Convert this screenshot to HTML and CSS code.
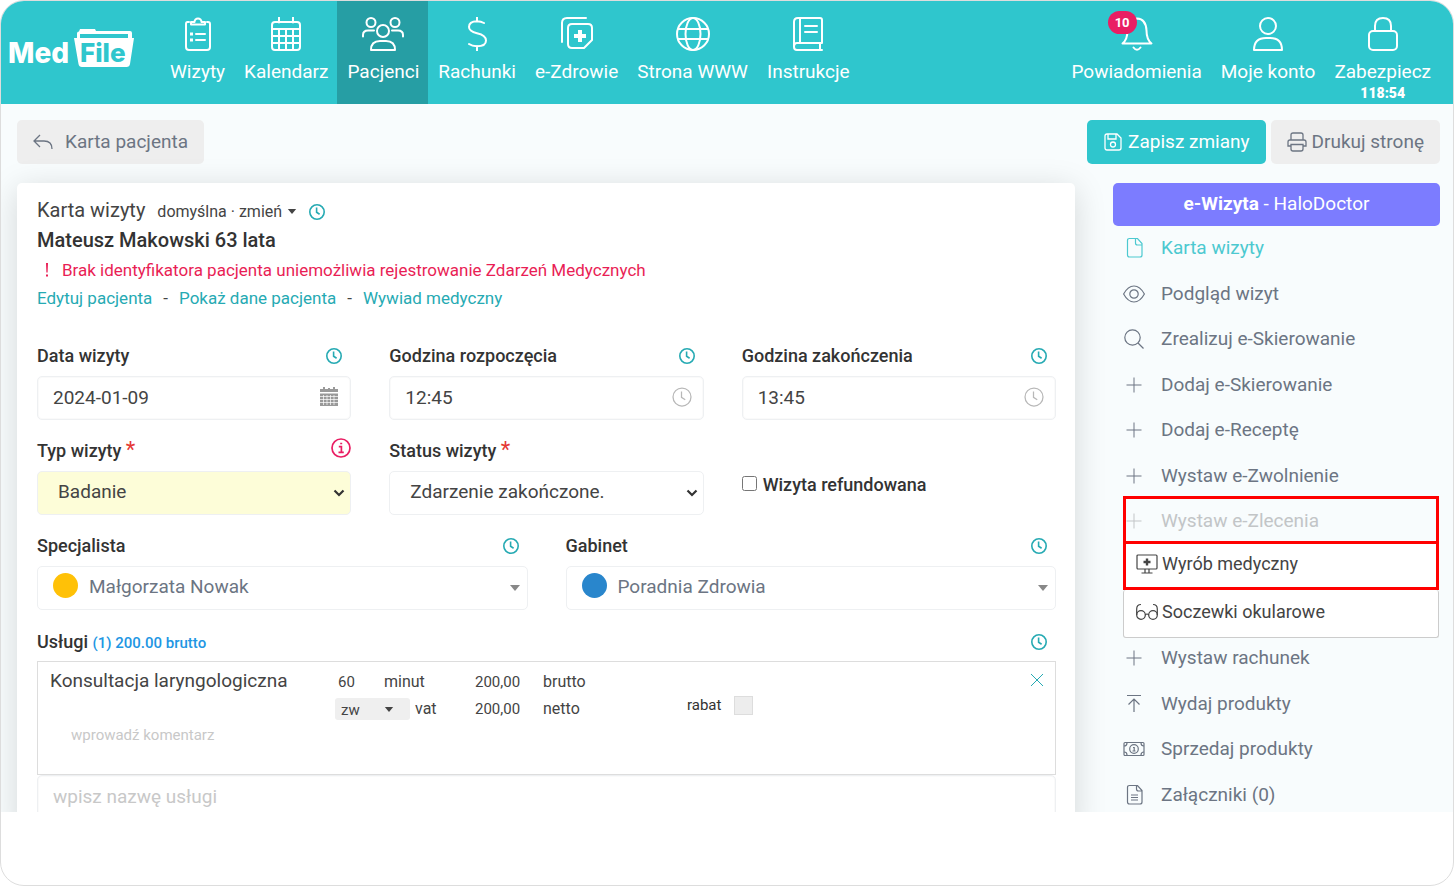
FILE: index.html
```html
<!DOCTYPE html>
<html lang="pl">
<head>
<meta charset="utf-8">
<meta name="viewport" content="width=device-width, initial-scale=1">
<title>MedFile – Karta wizyty</title>
<link rel="stylesheet" href="styles.css">
</head>
<body>
<svg class="sprite" aria-hidden="true">
  <symbol id="clock" viewBox="0 0 16 16"><circle cx="8" cy="8" r="7.2"/><path d="M7.6 3.6v4.7l3 1.9"/></symbol>
  <symbol id="plus" viewBox="0 0 16 16"><path d="M8 0.5v15M0.5 8h15"/></symbol>
  <symbol id="caret" viewBox="0 0 10 6"><path d="M0 0h10L5 6z"/></symbol>
  <symbol id="chevron" viewBox="0 0 12 8"><path d="m1.500 1.500 4.500 4.500 4.500-4.500"/></symbol>
</svg>
<div class="frame">
  <header class="topbar">
    <a class="logo" href="#" aria-label="MedFile">
      <svg viewBox="0 0 126 42" width="126" height="42">
        <path d="M68 12V5.500q0-2 2-2l1-2.500h15l1 2h34q2 0 2 2v7z" fill="#fff"/>
        <path d="M71 6h48v6H71z" fill="#2fc6cd"/>
        <path d="M72 6h46v6H72z" fill="#2fc6cd"/>
        <path d="M65 10h60l-4 26q-.5 3-3.500 3H73q-3 0-3.500-3z" fill="#fff"/>
        <text class="logo-text" x="-1" y="35">Med</text>
        <text class="logo-text logo-file" x="71" y="34">File</text>
      </svg>
    </a>
    <nav class="nav">
      <a class="nav-item" href="#">
        <svg class="ico" viewBox="0 0 34 34"><path d="M8 5H6.500Q5 5 5 7v23q0 3 3 3h18q3 0 3-3V7q0-2-2-2h-1M10 7.500h14M10 7.500V5h3.500a3.500 3.500 0 0 1 7 0H24v2.500M15 17h9M15 23h9"/><path class="dot" d="M9 15.500h3v3H9zM9 21.500h3v3H9z"/></svg>
        <span>Wizyty</span></a>
      <a class="nav-item" href="#">
        <svg class="ico" viewBox="0 0 34 34"><rect x="3" y="5" width="28" height="28" rx="3"/><path d="M10 0.500v5M24 0.500v5M3 12h28M3 19h28M3 26h28M10 12v21M17 12v21M24 12v21"/></svg>
        <span>Kalendarz</span></a>
      <a class="nav-item active" href="#" aria-current="page">
        <svg class="ico ico-wide" viewBox="0 0 42 34"><circle cx="9" cy="5.500" r="4.500"/><circle cx="33" cy="5.500" r="4.500"/><circle cx="21" cy="14" r="6"/><path d="M1 19.500v-1.500q0-4.500 5-4.500h6M41 19.500v-1.500q0-4.500-5-4.500h-6M9 33q0-9 9-9h6q9 0 9 9z"/></svg>
        <span>Pacjenci</span></a>
      <a class="nav-item" href="#">
        <svg class="ico" viewBox="0 0 34 34"><path d="M17 0v4.500M17 29v5M24 6q-3-1.700-7-1.700-8 0-8 5.700 0 4.300 8 6.200 9 2.100 9 7.300 0 5.700-9 5.700-5 0-8-2.200"/></svg>
        <span>Rachunki</span></a>
      <a class="nav-item" href="#">
        <svg class="ico" viewBox="0 0 34 34"><path d="M2 25V6q0-5 5-5h19M12 7h16q4 0 4 4v12l-8 8H12q-4 0-4-4V11q0-4 4-4z"/><path class="dot" d="M18 13h4v4h4v4h-4v4h-4v-4h-4v-4h4z"/></svg>
        <span>e-Zdrowie</span></a>
      <a class="nav-item" href="#">
        <svg class="ico" viewBox="0 0 34 34"><circle cx="17" cy="17" r="16"/><ellipse cx="17" cy="17" rx="7.500" ry="16"/><path d="M2.500 12h29M2.500 22h29"/></svg>
        <span>Strona WWW</span></a>
      <a class="nav-item" href="#">
        <svg class="ico" viewBox="0 0 34 34"><path d="M31 26V3q0-2-2-2H7Q3 1 3 5v25q0 3 3 3h25M31 26H6q-3 0-3 4M29 26v7M9 1v25M14 9h12M14 15h12"/></svg>
        <span>Instrukcje</span></a>
    </nav>
    <nav class="nav nav-right">
      <a class="nav-item" href="#">
        <span class="bell"><svg class="ico" viewBox="0 0 34 34"><path d="M2.500 26.500q5-4 5-13Q8 2 17 1.500 26 2 26.500 13.500q0 9 5 13z"/><path d="M13.500 30.500q3.500 4.500 7 0"/></svg><span class="badge">10</span></span>
        <span>Powiadomienia</span></a>
      <a class="nav-item" href="#">
        <svg class="ico" viewBox="0 0 34 34"><circle cx="17" cy="9" r="8"/><path d="M3 33q0-12 12-12h4q12 0 12 12z"/></svg>
        <span>Moje konto</span></a>
      <a class="nav-item" href="#">
        <svg class="ico" viewBox="0 0 34 34"><rect x="3" y="14" width="28" height="19" rx="4"/><path d="M9 14V9q0-8 8-8t8 8v5"/></svg>
        <span>Zabezpiecz</span><strong class="timer">118:54</strong></a>
    </nav>
  </header>

  <main class="main">
    <div class="toolbar">
      <button class="btn btn-back" type="button"><svg class="i20" viewBox="0 0 20 20"><path d="M7 3 1 9l6 6M1 9h10q8 0 8 8"/></svg>Karta pacjenta</button>
      <div class="toolbar-end">
        <button class="btn btn-primary" type="button"><svg class="i20" viewBox="0 0 20 20"><path d="M4 2h10l4 4v10q0 2-2 2H4q-2 0-2-2V4q0-2 2-2zM5 2v5h8V2"/><circle cx="10" cy="12.500" r="2.500"/></svg>Zapisz zmiany</button>
        <button class="btn" type="button"><svg class="i20" viewBox="0 0 20 20"><path d="M4 8V3q0-2 2-2h8q2 0 2 2v5M4 14H1v-4q0-2 2-2h14q2 0 2 2v4h-3M4 12.500h12V17q0 2-2 2H6q-2 0-2-2z"/></svg>Drukuj stronę</button>
      </div>
    </div>

    <div class="columns">
      <form class="card">
        <div class="title-row">
          <h1>Karta wizyty</h1>
          <button class="link-btn template" type="button">domyślna · zmień <svg class="caret" width="10" height="5"><use href="#caret"/></svg></button>
          <button class="link-btn history" type="button" aria-label="Historia"><svg class="clock"><use href="#clock"/></svg></button>
        </div>
        <h2>Mateusz Makowski 63 lata</h2>
        <p class="warning"><svg width="4" height="14" viewBox="0 0 4 14"><path d="M1 0h2l-.4 9.500H1.400zM1 11.500h2v2H1z"/></svg>Brak identyfikatora pacjenta uniemożliwia rejestrowanie Zdarzeń Medycznych</p>
        <p class="links"><a href="#">Edytuj pacjenta</a><span>-</span><a href="#">Pokaż dane pacjenta</a><span>-</span><a href="#">Wywiad medyczny</a></p>

        <div class="fields three">
          <div class="field">
            <div class="label-row"><label for="date">Data wizyty</label><svg class="clock"><use href="#clock"/></svg></div>
            <div class="control"><input id="date" type="text" value="2024-01-09"><svg class="inner-ico" viewBox="0 0 20 20"><path class="cal" d="M1 2h18v3H1zM4 0h2v3H4zM14 0h2v3h-2zM9 1h2v2H9zM1 6.500h18V19H1z"/><path class="cal-lines" d="M1 9.500h18M1 12.500h18M1 15.500h18M4.500 8v10M8 8v10M11.500 8v10M15 8v10"/></svg></div>
          </div>
          <div class="field">
            <div class="label-row"><label for="start">Godzina rozpoczęcia</label><svg class="clock"><use href="#clock"/></svg></div>
            <div class="control"><input id="start" type="text" value="12:45"><svg class="inner-ico"><use href="#clock"/></svg></div>
          </div>
          <div class="field">
            <div class="label-row"><label for="end">Godzina zakończenia</label><svg class="clock"><use href="#clock"/></svg></div>
            <div class="control"><input id="end" type="text" value="13:45"><svg class="inner-ico"><use href="#clock"/></svg></div>
          </div>
          <div class="field">
            <div class="label-row"><label for="type">Typ wizyty <b class="req">*</b></label><svg class="info" viewBox="0 0 20 20"><circle cx="10" cy="10" r="9"/><path d="M7.800 8.700h2.600v5.600M7.500 14.300h5.300M9.200 5.500h2"/></svg></div>
            <div class="control"><select id="type" class="required"><option>Badanie</option></select><svg class="chevron"><use href="#chevron"/></svg></div>
          </div>
          <div class="field">
            <div class="label-row"><label for="status">Status wizyty <b class="req">*</b></label></div>
            <div class="control"><select id="status"><option>Zdarzenie zakończone.</option></select><svg class="chevron"><use href="#chevron"/></svg></div>
          </div>
          <div class="check"><input id="refund" type="checkbox"><label for="refund">Wizyta refundowana</label></div>
        </div>

        <div class="fields two">
          <div class="field">
            <div class="label-row"><label for="doctor">Specjalista</label><svg class="clock"><use href="#clock"/></svg></div>
            <div class="control picker"><i class="swatch yellow"></i><select id="doctor"><option>Małgorzata Nowak</option></select><svg class="caret" width="10" height="6"><use href="#caret"/></svg></div>
          </div>
          <div class="field">
            <div class="label-row"><label for="room">Gabinet</label><svg class="clock"><use href="#clock"/></svg></div>
            <div class="control picker"><i class="swatch blue"></i><select id="room"><option>Poradnia Zdrowia</option></select><svg class="caret" width="10" height="6"><use href="#caret"/></svg></div>
          </div>
        </div>

        <section class="services">
          <div class="label-row"><label for="service">Usługi <span class="sum">(1) 200.00 brutto</span></label><svg class="clock"><use href="#clock"/></svg></div>
          <div class="service">
            <div class="service-main">
              <span class="service-name">Konsultacja laryngologiczna</span>
              <div class="lines">
                <div class="line"><input class="num minutes" value="60" aria-label="minut"><span>minut</span></div>
                <div class="line"><span class="vat"><select aria-label="vat"><option>zw</option></select><svg class="caret" width="10" height="5"><use href="#caret"/></svg></span><span>vat</span></div>
              </div>
              <div class="lines">
                <div class="line"><input class="num" value="200,00" aria-label="brutto"></div>
                <div class="line"><input class="num" value="200,00" aria-label="netto"></div>
              </div>
              <div class="lines">
                <div class="line">brutto</div>
                <div class="line">netto</div>
              </div>
              <label class="discount" for="discount">rabat</label>
              <input class="discount-box" id="discount" type="checkbox">
              <button class="link-btn remove" type="button" aria-label="Usuń"><svg width="12" height="12" viewBox="0 0 12 12"><path d="M0 0l12 12M12 0 0 12"/></svg></button>
            </div>
            <input class="comment" type="text" placeholder="wprowadź komentarz" aria-label="Komentarz">
          </div>
          <div class="control"><input id="service" type="text" placeholder="wpisz nazwę usługi"></div>
        </section>
      </form>

      <aside class="side">
        <button class="ewizyta" type="button"><b>e-Wizyta</b> - HaloDoctor</button>
        <ul class="side-list">
          <li><a class="side-link current" href="#"><svg class="si" viewBox="0 0 22 22"><path d="M6.500 1.500h8l4.500 5V18q0 2-2 2H6.500q-2 0-2-2V3.500q0-2 2-2zM12.500 1.500V6q0 2 2 2H19"/></svg>Karta wizyty</a></li>
          <li><a class="side-link" href="#"><svg class="si" viewBox="0 0 22 22"><path d="M.600 11Q5 3 11 3t10.400 8Q17 19 11 19T.600 11z"/><circle cx="11" cy="11" r="4.200"/></svg>Podgląd wizyt</a></li>
          <li><a class="side-link" href="#"><svg class="si" viewBox="0 0 22 22"><circle cx="9.500" cy="9.500" r="7.700"/><path d="m15 15 5.500 5.500"/></svg>Zrealizuj e-Skierowanie</a></li>
          <li><a class="side-link" href="#"><svg class="si plus"><use href="#plus"/></svg>Dodaj e-Skierowanie</a></li>
          <li><a class="side-link" href="#"><svg class="si plus"><use href="#plus"/></svg>Dodaj e-Receptę</a></li>
          <li><a class="side-link" href="#"><svg class="si plus"><use href="#plus"/></svg>Wystaw e-Zwolnienie</a></li>
          <li class="expanded">
            <a class="side-link muted marked" href="#"><svg class="si plus"><use href="#plus"/></svg>Wystaw e-Zlecenia</a>
            <a class="sub-link marked" href="#"><svg class="si" viewBox="0 0 22 22"><rect x="1" y="2" width="20" height="14" rx="1"/><path d="M9 16v4M13 16v4M5.500 20h11"/><path class="dot" d="M9.800 5.500h2.400v2.300h2.300v2.400h-2.300v2.300H9.800v-2.300H7.500V7.800h2.300z"/></svg>Wyrób medyczny</a>
            <a class="sub-link" href="#"><svg class="si" viewBox="0 0 22 22"><circle cx="5" cy="14" r="4.300"/><circle cx="17" cy="14" r="4.300"/><path d="M9.300 14q1.700-2 3.400 0M.700 14V8q0-4.500 4.300-4.500M21.300 14V8q0-4.500-4.300-4.500"/></svg>Soczewki okularowe</a>
          </li>
          <li><a class="side-link" href="#"><svg class="si plus"><use href="#plus"/></svg>Wystaw rachunek</a></li>
          <li><a class="side-link" href="#"><svg class="si" viewBox="0 0 22 22"><path d="M4 2.500h14M11 19V6M5.500 11.500 11 6l5.500 5.500"/></svg>Wydaj produkty</a></li>
          <li><a class="side-link" href="#"><svg class="si" viewBox="0 0 22 22"><rect x="1" y="4.500" width="20" height="13" rx="1"/><circle cx="11" cy="11" r="4.300"/><path d="M1 8q3 0 3-3M21 8q-3 0-3-3M1 14q3 0 3 3M21 14q-3 0-3 3M10 9.500h1.200v3.500M9.500 13h3"/></svg>Sprzedaj produkty</a></li>
          <li><a class="side-link" href="#"><svg class="si" viewBox="0 0 22 22"><path d="M6.500 1.500h8l4.500 5V18q0 2-2 2H6.500q-2 0-2-2V3.500q0-2 2-2zM13.500 1.500V5q0 2 2 2H19M8 11h7M8 13.500h7M8 16h7"/></svg>Załączniki (0)</a></li>
        </ul>
      </aside>
    </div>
  </main>
</div>
</body>
</html>
```
FILE: styles.css
```css
:root {
  --teal: #2fc6cd;
  --teal-dark: #26aab3;
  --line: #eef0f2;
  --gray: #6c7583;
  --text: #444;
}

* { box-sizing: border-box; }

body {
  margin: 0;
  background: #fff;
  color: var(--text);
  font: 400 19px/24px Roboto, "Open Sans", sans-serif;
}

h1, h2, p, ul { margin: 0; padding: 0; }
ul { list-style: none; }
a { color: inherit; text-decoration: none; }
button, input, select { font: inherit; color: inherit; }
svg { display: block; flex: none; fill: none; stroke: currentColor; }
.sprite { position: absolute; width: 0; height: 0; }
.dot, .caret { fill: currentColor; stroke: none; }

.frame {
  display: flex;
  flex-direction: column;
  height: 100vh;
  padding-bottom: 73px;
  border: 1px solid #ddd;
  border-radius: 24px;
  overflow: hidden;
}

/* Top bar */
.topbar {
  display: flex;
  flex: none;
  height: 103px;
  padding: 0 13px 0 8px;
  background: var(--teal);
  color: #fff;
}
.logo { width: 151px; padding-top: 27px; }
.logo svg { stroke: none; }
.logo-text { font: 800 28px Inter, sans-serif; fill: #fff; }
.logo-file { font-size: 26px; fill: var(--teal); }
.nav { display: flex; }
.nav-right { margin-left: auto; }
.nav-item {
  display: flex;
  flex-direction: column;
  align-items: center;
  padding: 16px 9px 0 10px;
}
.nav-item > span:last-of-type { margin-top: 9px; }
.active { background: #269ea4; }
.ico { width: 34px; height: 34px; stroke-width: 2; stroke-linecap: round; stroke-linejoin: round; }
.ico-wide { width: 42px; }
.bell { position: relative; }
.badge {
  position: absolute;
  top: -6px;
  left: -12px;
  width: 29px;
  border-radius: 12px;
  background: #e91e63;
  font-size: 13px;
  font-weight: 700;
  line-height: 23px;
  text-align: center;
}
.timer { font-size: 14px; font-weight: 900; line-height: 19px; }

/* Page */
.main {
  flex: 1;
  min-height: 0;
  padding: 16px 13px 0 16px;
  overflow: hidden;
  background: #f8fcfd;
}
.toolbar { display: flex; justify-content: space-between; margin-bottom: 19px; }
.toolbar-end { display: flex; gap: 5px; }
.btn {
  display: flex;
  align-items: center;
  gap: 5px;
  height: 44px;
  padding: 0 16px 1px;
  border: 0;
  border-radius: 5px;
  background: #eee;
  color: var(--gray);
}
.btn-back { gap: 12px; }
.btn-primary { background: var(--teal); color: #fff; }
.i20 { width: 20px; height: 20px; stroke-width: 1.3; }

.columns { display: grid; grid-template-columns: minmax(0, 1fr) 327px; gap: 38px; }
.card {
  padding: 12px 19px 12px 20px;
  border-radius: 5px;
  background: #fff;
  box-shadow: 0 6px 32px rgba(0, 0, 0, .15);
}
.title-row { display: flex; align-items: center; height: 30px; gap: 12px; }
h1 { font-size: 20px; font-weight: 400; }
h2 { color: #333; font-size: 20px; font-weight: 500; line-height: 30px; }
.link-btn { display: flex; align-items: center; padding: 0; border: 0; background: none; color: var(--teal-dark); }
.template { gap: 5px; padding-top: 3px; color: var(--text); font-size: 16px; }
.history { padding-top: 4px; }
.clock { width: 16px; height: 16px; overflow: visible; color: var(--teal-dark); stroke-width: 1.6; }
.warning, .links { display: flex; align-items: center; font-size: 17px; }
.warning { gap: 13px; height: 29px; padding-left: 8px; color: #e91e55; }
.warning svg { fill: currentColor; stroke: none; }
.links { gap: 11px; height: 27px; margin-bottom: 33px; }
.links a { color: var(--teal-dark); }

.fields { display: grid; gap: 19px 38px; margin-bottom: 19px; }
.three { grid-template-columns: repeat(3, minmax(0, 1fr)); }
.two { grid-template-columns: repeat(2, minmax(0, 1fr)); }
.label-row {
  display: flex;
  align-items: center;
  justify-content: space-between;
  height: 24px;
  margin-bottom: 8px;
  padding-right: 9px;
}
label { color: #333; font-size: 18px; font-weight: 500; }
.req { color: #e53935; font-size: 22px; font-weight: 400; line-height: 20px; }
.info { width: 20px; height: 20px; margin: 0 -9px 7px 0; color: #e91e63; stroke-width: 1.7; }
.control { position: relative; }
.control input, .control select {
  display: block;
  width: 100%;
  height: 44px;
  padding: 0 15px 2px;
  border: 1px solid var(--line);
  border-radius: 5px;
  background: #fff;
}
.control select { padding-left: 20px; appearance: none; }
.control input { box-shadow: inset 0 0 0 1px #fafafa; }
input::placeholder { color: #c8c8c8; opacity: 1; }
.inner-ico { position: absolute; top: 11px; right: 12px; width: 20px; height: 20px; color: #b8b8b8; }
.chevron { position: absolute; top: 18px; right: 6px; width: 12px; height: 8px; color: #333; stroke-width: 2.2; }
.cal { fill: #999; stroke: none; }
.cal-lines { stroke: #fff; stroke-width: .700; }
.control .required { background: #fdfdd8; }
.check { display: flex; align-items: center; gap: 6px; height: 24px; margin-top: 34px; }
.check input { width: 15px; height: 15px; margin: 0 0 4px; }
.picker select { padding-left: 51px; color: var(--gray); }
.picker .caret { position: absolute; top: 19px; right: 8px; color: #888; }
.swatch { position: absolute; top: 7px; left: 16px; width: 25px; height: 25px; border-radius: 50%; }
.yellow { background: #ffc107; }
.blue { background: #2986cc; }

.services .label-row { padding-top: 2px; }
.sum { color: #2196e3; font-size: 15px; }
.service { height: 114px; padding: 6px 12px; border: 1px solid #ddd; font-size: 16px; }
.service-main { display: grid; grid-template-columns: 285px 140px 68px 144px 47px 20px 1fr; }
.service-name { padding-top: 1px; font-size: 19px; }
.line { display: flex; align-items: center; gap: 5px; height: 27px; }
.num { width: 60px; padding: 0; border: 0; background: none; font-size: 15px; }
.minutes { width: 41px; margin-left: 3px; }
.vat { position: relative; }
.vat select {
  display: block;
  width: 75px;
  height: 22px;
  padding: 0 6px 2px;
  border: 0;
  border-radius: 3px;
  appearance: none;
  background: #efefef;
  font-size: 15px;
}
.vat .caret { position: absolute; top: 9px; right: 16px; }
.discount { padding-top: 25px; font-size: 15px; font-weight: 400; }
.discount-box {
  width: 19px;
  height: 19px;
  margin: 28px 0 0;
  border: 1px solid #ddd;
  appearance: none;
  background: #ededed;
}
.remove { align-self: start; justify-self: end; margin-top: 6px; }
.comment { display: block; width: 280px; margin: 1px 0 0 21px; padding: 0; border: 0; background: none; font-size: 15px; }

/* Side menu */
.ewizyta {
  display: block;
  width: 100%;
  height: 43px;
  padding: 0 0 2px;
  border: 0;
  border-radius: 5px;
  background: #7c7cff;
  color: #fff;
}
.side-list { display: grid; grid-auto-rows: 1fr; height: 592px; }
.side-link, .sub-link { display: flex; align-items: center; }
.side-link { gap: 16px; height: 100%; padding: 0 0 1px 10px; color: var(--gray); }
.side-link.current { color: #4cc9d0; }
.si { width: 22px; height: 22px; stroke-width: 1.200; }
.si.plus { padding: 3px; stroke-width: 1; }
.expanded { grid-row: span 3; margin: -3px 1px 0 10px; color: #444; }
.expanded .side-link { height: 48px; padding: 2px 0 0; color: #c2c5c7; }
.sub-link { height: 48px; padding: 0 0 3px 12px; gap: 4px; border: 1px solid #ccc; border-top: 0; border-radius: 3px; background: #fff; font-size: 18px; }
.expanded .marked { border: 3px solid #f00; border-radius: 0; }
.sub-link.marked { height: 49px; margin-top: -3px; padding-left: 10px; }
.side-link.marked .si { margin-left: -3px; }
```
